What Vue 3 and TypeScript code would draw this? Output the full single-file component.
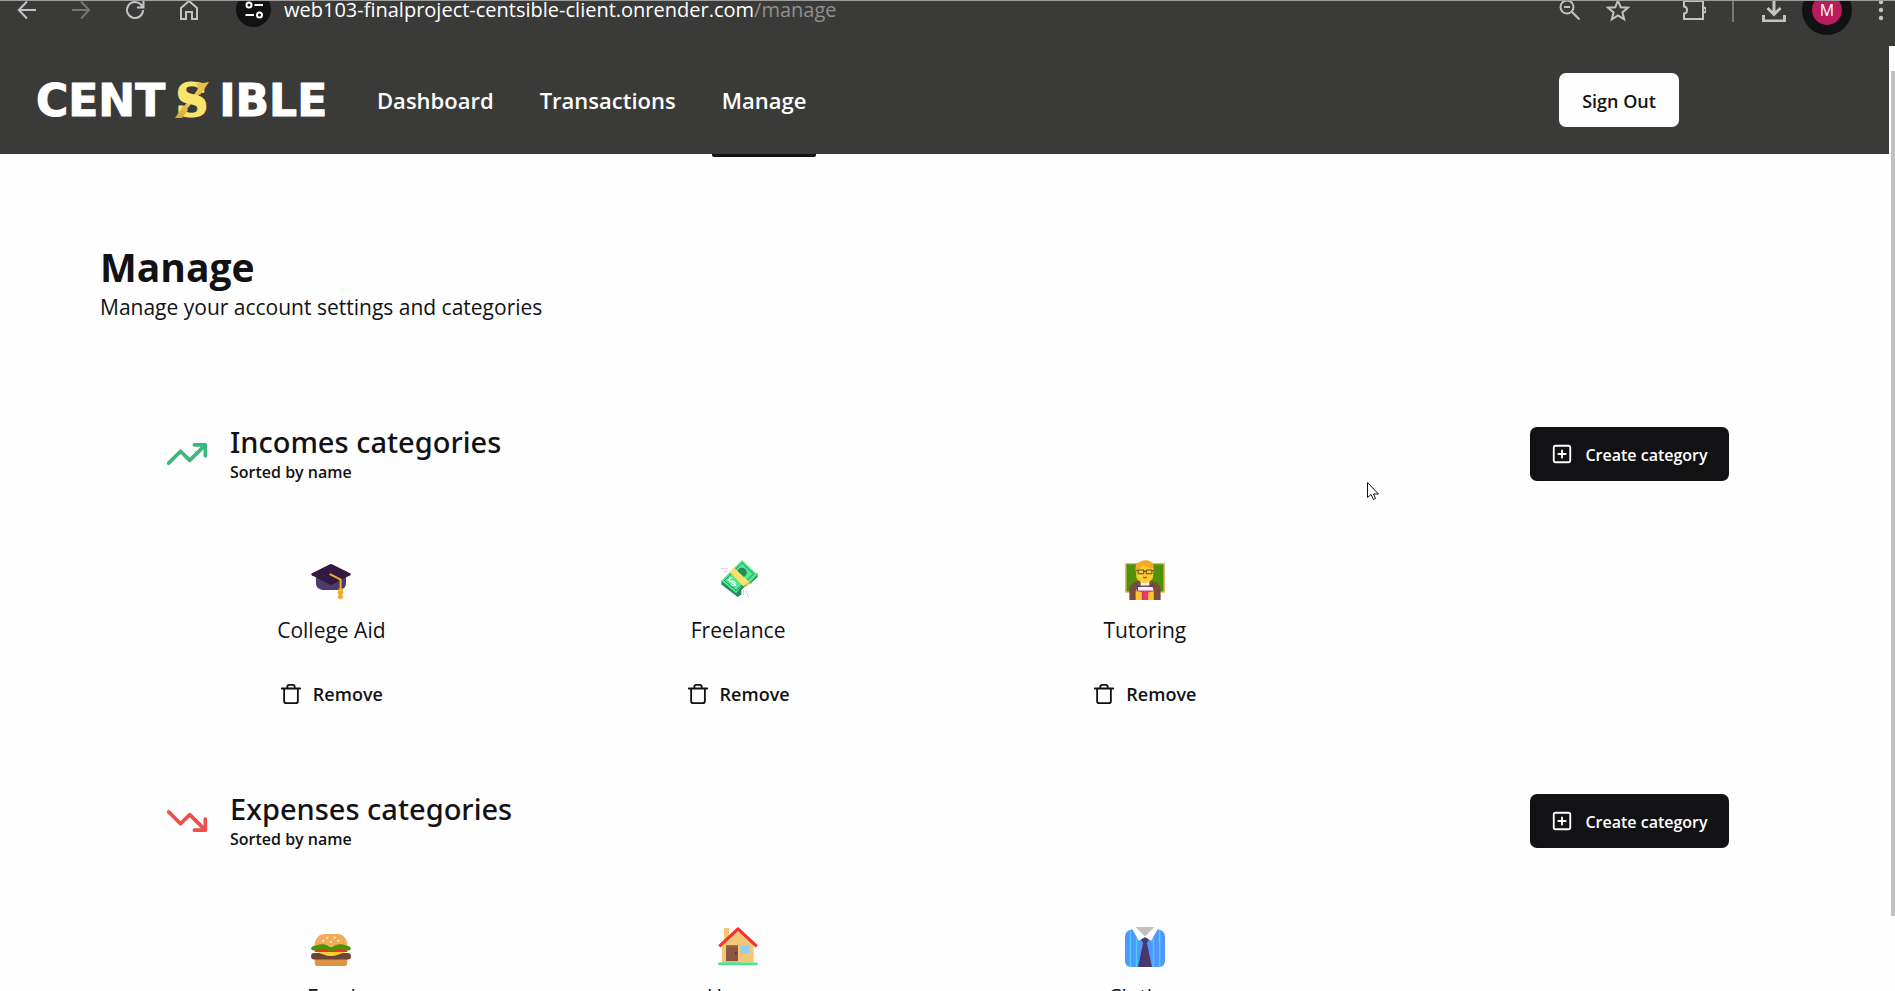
<script setup lang="ts">
type IconName = 'cap' | 'money' | 'teacher' | 'burger' | 'house' | 'shirt'

interface Category {
  name: string
  icon: IconName
}

interface Section {
  title: string
  kind: 'income' | 'expense'
  items: Category[]
}

const links: { label: string; href: string; active: boolean }[] = [
  { label: 'Dashboard', href: '#dashboard', active: false },
  { label: 'Transactions', href: '#transactions', active: false },
  { label: 'Manage', href: '#manage', active: true },
]

const sections: Section[] = [
  {
    title: 'Incomes categories',
    kind: 'income',
    items: [
      { name: 'College Aid', icon: 'cap' },
      { name: 'Freelance', icon: 'money' },
      { name: 'Tutoring', icon: 'teacher' },
    ],
  },
  {
    title: 'Expenses categories',
    kind: 'expense',
    items: [
      { name: 'Food', icon: 'burger' },
      { name: 'House', icon: 'house' },
      { name: 'Clothes', icon: 'shirt' },
    ],
  },
]
</script>

<template>
  <div class="window">
    <div class="toolbar">
      <div class="tools">
        <button class="tool" aria-label="Back">
          <svg viewBox="0 0 24 24"><path d="M21 12H4M12 3.500L3.800 12l8.200 8.500" /></svg>
        </button>
        <button class="tool dim" aria-label="Forward">
          <svg viewBox="0 0 24 24"><path d="M3 12h17M12 3.500l8.200 8.500-8.200 8.500" /></svg>
        </button>
        <button class="tool" aria-label="Reload">
          <svg viewBox="0 0 24 24"><path d="M20 12a8 8 0 1 1-2.400-5.700L20 9M20.500 3v6.500H14" /></svg>
        </button>
        <button class="tool" aria-label="Home">
          <svg viewBox="0 0 24 24"><path d="M4 10l8-7 8 7v11h-5v-7H9v7H4z" /></svg>
        </button>
      </div>
      <button class="site-info" aria-label="Site information">
        <svg viewBox="0 0 24 24">
          <circle cx="7" cy="7" r="2.500" /><path d="M12.500 7H21M3.500 17H12" /><circle cx="17.500" cy="17" r="2.500" />
        </svg>
      </button>
      <div class="address">web103-finalproject-centsible-client.onrender.com<span>/manage</span></div>
      <div class="actions">
        <button class="tool" aria-label="Zoom">
          <svg viewBox="0 0 24 24"><circle cx="9" cy="9" r="6.500" /><path d="M14 14l7.500 7.500M6 9h6" /></svg>
        </button>
        <button class="tool" aria-label="Bookmark">
          <svg viewBox="0 0 24 24"><path d="M12 2.500l2.700 6.700 7.200.500-5.500 4.700 1.800 7-6.200-3.900-6.200 3.900 1.800-7-5.500-4.700 7.200-.500z" /></svg>
        </button>
        <button class="tool extensions" aria-label="Extensions">
          <svg viewBox="0 0 24 24"><path d="M2 3h19v18H2v-5.500c4 0 4-7 0-7zM21.500 9.500a2.500 2.500 0 0 1 0 5" /></svg>
        </button>
        <span class="divider"></span>
        <button class="tool" aria-label="Downloads">
          <svg viewBox="0 0 24 24" class="heavy"><path d="M12 0v16M5.500 10l6.500 6.500 6.500-6.500M1.500 17v6h21v-6" /></svg>
        </button>
        <button class="profile" aria-label="Profile"><span>M</span></button>
        <button class="tool" aria-label="Menu">
          <svg viewBox="0 0 24 24" class="solid">
            <circle cx="12" cy="4" r="2.200" /><circle cx="12" cy="12" r="2.200" /><circle cx="12" cy="20" r="2.200" />
          </svg>
        </button>
      </div>
    </div>

    <div class="viewport">
      <div class="page">
        <header class="header">
          <a class="logo" href="#home" aria-label="Centsible">
            <span>CENT</span>
            <svg viewBox="0 0 36 38">
              <defs>
                <linearGradient id="gold" x1="0" y1="1" x2="1" y2="0">
                  <stop offset="0" stop-color="#d9a520" />
                  <stop offset="0.500" stop-color="#f4c77c" />
                  <stop offset="1" stop-color="#e3bd2e" />
                </linearGradient>
              </defs>
              <path d="M35 1L22 18h-5l9-13zM1 37l14-18h5L10 32z" fill="url(#gold)" />
              <text x="18" y="35" text-anchor="middle">S</text>
              <path d="M22 2h7l6-1-9 13zM1 37l9-13 4 5-6 8z" fill="url(#gold)" />
            </svg>
            <span>IBLE</span>
          </a>
          <nav class="nav">
            <a v-for="link in links" :key="link.label" :href="link.href" :class="{ active: link.active }">{{ link.label }}</a>
          </nav>
          <button class="sign-out">Sign Out</button>
        </header>

        <main>
          <div class="intro">
            <h1>Manage</h1>
            <p>Manage your account settings and categories</p>
          </div>

          <section v-for="section in sections" :key="section.title" class="section">
            <div class="section-head">
              <svg class="trend" :class="section.kind" viewBox="0 0 24 24">
                <path v-if="section.kind === 'income'" d="M2 17l6.500-6.500 5 5L22 7M16 7h6v6" />
                <path v-else d="M2 7l6.500 6.500 5-5L22 17M16 17h6v-6" />
              </svg>
              <div class="section-title">
                <h2>{{ section.title }}</h2>
                <p>Sorted by name</p>
              </div>
              <button class="create">
                <svg viewBox="0 0 24 24"><rect x="3" y="3" width="18" height="18" rx="2" /><path d="M8 12h8M12 8v8" /></svg>
                <span>Create category</span>
              </button>
            </div>

            <div class="grid">
              <article v-for="item in section.items" :key="item.name" class="card">
                <svg class="emoji" viewBox="0 0 32 32">
                  <g v-if="item.icon === 'cap'">
                    <path d="M4 13v6c0 3 3 5 6 5h12c3 0 6-2 6-5v-6z" fill="#4a3b6b" />
                    <path d="M14.800 3.500q1.200-.600 2.400 0L31.300 10.600q1 .700 0 1.500L17.200 19.600q-1.200.600-2.400 0L.700 12.100q-1-.800 0-1.500z" fill="#321b41" />
                    <path d="M15.500 11.500l8.200 4.200V24" fill="none" stroke="#f3ad2b" stroke-width="1.600" stroke-linecap="round" />
                    <path d="M22 22.800h3.500l.300 3.500-.800 1 .800 2.500-1.500 1.500h-1.500l-1.500-1.500.800-2.500-.800-1z" fill="#f3ad2b" />
                  </g>
                  <g v-else-if="item.icon === 'money'">
                    <path d="M2.700 16.500v3l13 10 3-2v-3.500l6-6 1 1 6-5.500v-3z" fill="#288a5f" />
                    <path d="M19.200 0L31.500 11.500 26 17.500l-4-.500-7.500 9.500L2.700 16.500z" fill="#51e98f" />
                    <path d="M19.200 2.200l9.300 9-14 13.200-9.300-8z" fill="none" stroke="#288a5f" stroke-width=".8" />
                    <circle cx="19.200" cy="10" r="3.800" fill="#288a5f" />
                    <path d="M9.300 9.300l3.200-3.300L25 17.500 20.300 21.200z" fill="#f9e36c" />
                    <path d="M22 19.800l3-2.300 2.500 1.500-3.500.500-1.500 2z" fill="#f6b338" />
                    <path d="M11.500 14.600c-2-1-3 .8-2 2s3.500-.4 4.200 1.400c.700 2-1.700 3.200-3.400 1.500M8 15.500l6.500 5" fill="none" stroke="#fff" stroke-width="1" />
                    <path d="M2 7h6M4.500 9h3M20.500 24v4M22.500 24.500l2 6" fill="none" stroke="#c4c4c8" stroke-width=".6" />
                  </g>
                  <g v-else-if="item.icon === 'teacher'">
                    <path d="M0 2.400h32v23.800H0z" fill="#e6b869" />
                    <path d="M1.200 3.400h29.600v21.700H1.200z" fill="#4f9208" />
                    <path d="M3.500 32V24c0-4 3-7 8-7.500h9c5 .500 8 3.500 8 7.500v8z" fill="#7a4c3c" />
                    <path d="M12.500 16h7v5h-7z" fill="#f4f4f4" />
                    <path d="M8.500 9C8 4 9.500 1.500 12 1.500 15-1 22 0 22.800 4L23 10z" fill="#f0ab2d" />
                    <path d="M9 8c3 0 4-2.500 5-4 3 2 6 2.500 8.500 3v6c0 3-4 5.500-6.500 5.500S9 16 9 13z" fill="#ffcc2e" />
                    <path d="M10.500 8h4.500v3h-4.500zM17 8h4.500v3H17zM15 9h2M9 8.500h1.500M21.500 8.500H23" fill="none" stroke="#59423f" stroke-width=".8" />
                    <path d="M14.500 13.600q1.500 1 3 0" fill="none" stroke="#ca2844" stroke-width="1" />
                    <path d="M10 21.500h12l1 3H9z" fill="#f5f0ff" />
                    <path d="M9.500 21l13-.300M9.500 21l.800 4" fill="none" stroke="#463566" stroke-width=".8" />
                    <path d="M10 24.500h13V32h-9v-5h-4z" fill="#f5316c" />
                    <path d="M8.500 25h2l3 1v6H8.500zM18.500 26l4.500-1v7h-4.500z" fill="#ffc32b" />
                  </g>
                  <g v-else-if="item.icon === 'burger'">
                    <path d="M3 25.500h26v3.200a2.500 2.500 0 0 1-2.500 2.500h-21A2.500 2.500 0 0 1 3 28.700z" fill="#db9545" />
                    <rect x="0" y="20.800" width="32" height="5.200" rx="2.600" fill="#6d4534" />
                    <path d="M3 19.500h26l-7 2.500q-6 2.500-12 0z" fill="#ffce31" />
                    <path d="M3 16.500h26V20H3z" fill="#f02f2f" />
                    <path d="M2.700 15.500C3 9 6.500 5.600 11 5.600h10c4.500 0 8 3.400 8.300 9.900z" fill="#f2ab57" />
                    <path d="M0 17.600c0-2 2-2.600 4-2.900 4-1.200 7-1.200 10 .600q2 .800 4 0c4-2 7-1.600 10-.500 2 .300 4 1 4 3-2 1.600-4 .900-6.500.200-2.500-1-4-.500-6 .400q-3.500 1.500-7 0c-3-1.400-5-.800-7 .200-2 .600-4 .500-5.500-1z" fill="#4f9208" />
                    <g fill="#fff0b3">
                      <circle cx="9.800" cy="11" r=".9" /><circle cx="13" cy="8.500" r=".9" /><circle cx="16" cy="12" r=".9" />
                      <circle cx="19" cy="8.500" r=".9" /><circle cx="22" cy="11" r=".9" />
                    </g>
                  </g>
                  <g v-else-if="item.icon === 'house'">
                    <path d="M4.800.800h4V11h-4zM3.200 13L16 2l12.500 11v15.500H3.200z" fill="#f3c775" />
                    <path d="M6.400 14.600H16v13H6.400z" fill="#8b5742" />
                    <path d="M6.400 14.600H16v1H6.400z" fill="#9d7647" />
                    <circle cx="14.300" cy="21" r=".8" fill="#46302b" />
                    <rect x="18.200" y="14.600" width="7" height="7" rx=".8" fill="#8cd0fa" />
                    <path d="M5.800 27.200h11v1.400h-11z" fill="#b8c4c6" />
                    <path d="M1 15.500L16 1.500l15 14" fill="none" stroke="#f1352f" stroke-width="2.600" stroke-linejoin="round" />
                    <rect x="0" y="28.400" width="32" height="2.200" rx="1.100" fill="#51e38e" />
                  </g>
                  <g v-else>
                    <path d="M5 2h22q5 1 5 6v19q0 5-5 5H5q-5 0-5-5V8q0-5 5-6z" fill="#4f96ff" />
                    <path d="M4.300 2.500V32M9.200 9v23M22.800 9v23M27.700 2.500V32" stroke="#50cdf5" stroke-width="1.200" />
                    <path d="M6 2l3-2h14l3 2-5 9-5-3-5 3z" fill="#fdfdfd" />
                    <path d="M8.500 0h15L16 7.500z" fill="#c0c0c2" />
                    <path d="M13.500 9.500L16 8.300l2.500 1.200.500 1-1.500 2L21.500 32h-11l4-19.500-1.500-2z" fill="#463869" />
                  </g>
                </svg>
                <h3>{{ item.name }}</h3>
                <button class="remove">
                  <svg viewBox="0 0 24 24"><path d="M2 6h20M4.500 6v13.500a2.500 2.500 0 0 0 2.500 2.500h10a2.500 2.500 0 0 0 2.500-2.500V6M8 6V4q0-2 2-2h4q2 0 2 2v2" /></svg>
                  Remove
                </button>
              </article>
            </div>
          </section>
        </main>
      </div>
      <div class="scrollbar"><div class="thumb"></div></div>
    </div>

    <svg class="cursor" viewBox="0 0 12 18"><path d="M.500.500v15l3.500-3 2.500 5 2-1-2-4.500h5z" /></svg>
  </div>
</template>

<style>
body {
  margin: 0;
  background: #fefefe;
}
</style>

<style scoped>
* {
  box-sizing: border-box;
}

.window {
  position: relative;
  display: flex;
  flex-direction: column;
  height: 100vh;
  overflow: hidden;
  color: #121214;
  font-family: "Open Sans", "Noto Sans", sans-serif;
}

h1,
h2,
h3,
p {
  margin: 0;
}

button {
  display: inline-flex;
  align-items: center;
  justify-content: center;
  padding: 0;
  border: 0;
  background: none;
  color: inherit;
  font-family: inherit;
  cursor: pointer;
}

a {
  color: inherit;
  text-decoration: none;
}

/* Browser toolbar, cut off by the window's upper edge */
.toolbar {
  flex: none;
  display: flex;
  align-items: center;
  height: 46px;
  padding: 0 2px 27px 15px;
  background: #3a3a38;
}

.toolbar::before {
  content: "";
  position: absolute;
  top: 0;
  left: 0;
  right: 0;
  z-index: 1;
  height: 1px;
  background: #9c9c9a;
}

.tools {
  display: flex;
  gap: 30px;
}

.tool {
  flex: none;
  width: 24px;
  height: 24px;
  color: #c3c3c3;
}

.tool.dim {
  color: #767676;
}

.tool svg,
.site-info svg {
  width: 24px;
  height: 24px;
  fill: none;
  stroke: currentColor;
  stroke-width: 2;
}

.tool svg.heavy {
  stroke-width: 3;
}

.tool svg.solid {
  fill: currentColor;
  stroke: none;
}

.site-info {
  flex: none;
  width: 35px;
  height: 35px;
  margin: 0 13px 0 35px;
  border-radius: 50%;
  background: #121214;
  color: #fff;
}

.address {
  flex: 1;
  color: #fff;
  font-size: 20px;
  line-height: 28px;
  white-space: nowrap;
}

.address span {
  color: #8f8f8f;
}

.actions {
  display: flex;
  align-items: center;
  gap: 24px;
}

.extensions {
  margin: 0 2px 0 28px;
}

.divider {
  width: 2px;
  height: 24px;
  margin-right: 4px;
  background: #767676;
}

.profile {
  width: 50px;
  height: 50px;
  margin: 0 -7px 0 -8px;
  border-radius: 50%;
  background: #121214;
}

.profile span {
  width: 30px;
  border-radius: 50%;
  background: #b81c5c;
  color: #fff;
  font-size: 16px;
  line-height: 30px;
}

.viewport {
  flex: 1;
  display: flex;
  min-height: 0;
}

.page {
  flex: 1;
  overflow: hidden;
}

.scrollbar {
  width: 6px;
  padding: 25px 0 75px 2px;
}

.thumb {
  height: 100%;
  background: #c1c1c1;
}

.header {
  display: flex;
  align-items: center;
  height: 108px;
  padding: 0 210px 0 36px;
  background: #3a3a38;
  color: #fff;
}

.logo {
  display: flex;
  align-items: center;
  gap: 9px;
  width: 331px;
  font-family: "DejaVu Sans", sans-serif;
  font-size: 44px;
  font-weight: 700;
  line-height: 48px;
}

.logo span {
  padding-top: 2px;
  -webkit-text-stroke: 1px #fff;
}

.logo svg {
  width: 36px;
  height: 38px;
  overflow: visible;
}

.logo text {
  fill: #f8e56c;
  stroke: #f8e56c;
  stroke-width: 2px;
  font-family: "DejaVu Serif", serif;
  font-size: 44px;
  font-weight: 700;
}

.nav {
  display: flex;
  flex: 1;
  gap: 26px;
  height: 108px;
}

.nav a {
  position: relative;
  padding: 0 10px;
  font-size: 22px;
  font-weight: 600;
  line-height: 108px;
}

.nav a.active::after {
  content: "";
  position: absolute;
  top: 108px;
  left: 0;
  right: 0;
  height: 3px;
  border-radius: 0 0 2px 2px;
  background: #121214;
}

.sign-out,
.create {
  height: 54px;
  border-radius: 7px;
  font-size: 18px;
  font-weight: 600;
}

.sign-out {
  width: 120px;
  padding-top: 2px;
  background: #fefefe;
  color: #121214;
}

.intro {
  padding: 88px 100px 0;
}

.intro h1 {
  font-size: 39px;
  font-weight: 700;
  line-height: 50px;
}

.intro p {
  font-size: 21px;
  line-height: 30px;
}

.section {
  height: 367px;
  margin: 0 134px 0 128px;
}

.section:first-of-type {
  margin-top: 102px;
}

.section-head {
  display: flex;
  align-items: center;
  height: 60px;
  padding: 0 26px 0 37px;
}

.trend {
  width: 44px;
  height: 44px;
  margin-right: 21px;
  fill: none;
  stroke-width: 2;
  stroke-linecap: round;
  stroke-linejoin: round;
}

.trend.income {
  stroke: #3cb57f;
}

.trend.expense {
  stroke: #ec4f4c;
}

.section-title {
  flex: 1;
  padding-bottom: 2px;
}

.section-title h2 {
  font-family: "Noto Sans", "Open Sans", sans-serif;
  font-size: 29px;
  font-weight: 500;
  line-height: 38px;
}

.section-title p {
  font-size: 16px;
  font-weight: 600;
  line-height: 22px;
}

.create {
  gap: 12px;
  width: 199px;
  background: #121214;
  color: #fff;
  font-size: 16px;
  white-space: nowrap;
}

.create span {
  padding-top: 2px;
}

.create svg,
.remove svg {
  width: 22px;
  height: 22px;
  fill: none;
  stroke: currentColor;
  stroke-width: 2;
  stroke-linecap: round;
}

.grid {
  display: grid;
  grid-template-columns: repeat(4, 1fr);
  padding-top: 76px;
}

.card {
  display: flex;
  flex-direction: column;
  align-items: center;
}

.emoji {
  width: 40px;
  height: 40px;
}

.card h3 {
  margin-top: 14px;
  font-size: 21px;
  font-weight: 400;
  line-height: 32px;
}

.remove {
  gap: 11px;
  height: 48px;
  margin-top: 24px;
  font-size: 18px;
  font-weight: 600;
}

.cursor {
  position: absolute;
  top: 482px;
  left: 1367px;
  width: 12px;
  height: 18px;
  fill: #fff;
  stroke: #121214;
  stroke-width: 1;
}
</style>
